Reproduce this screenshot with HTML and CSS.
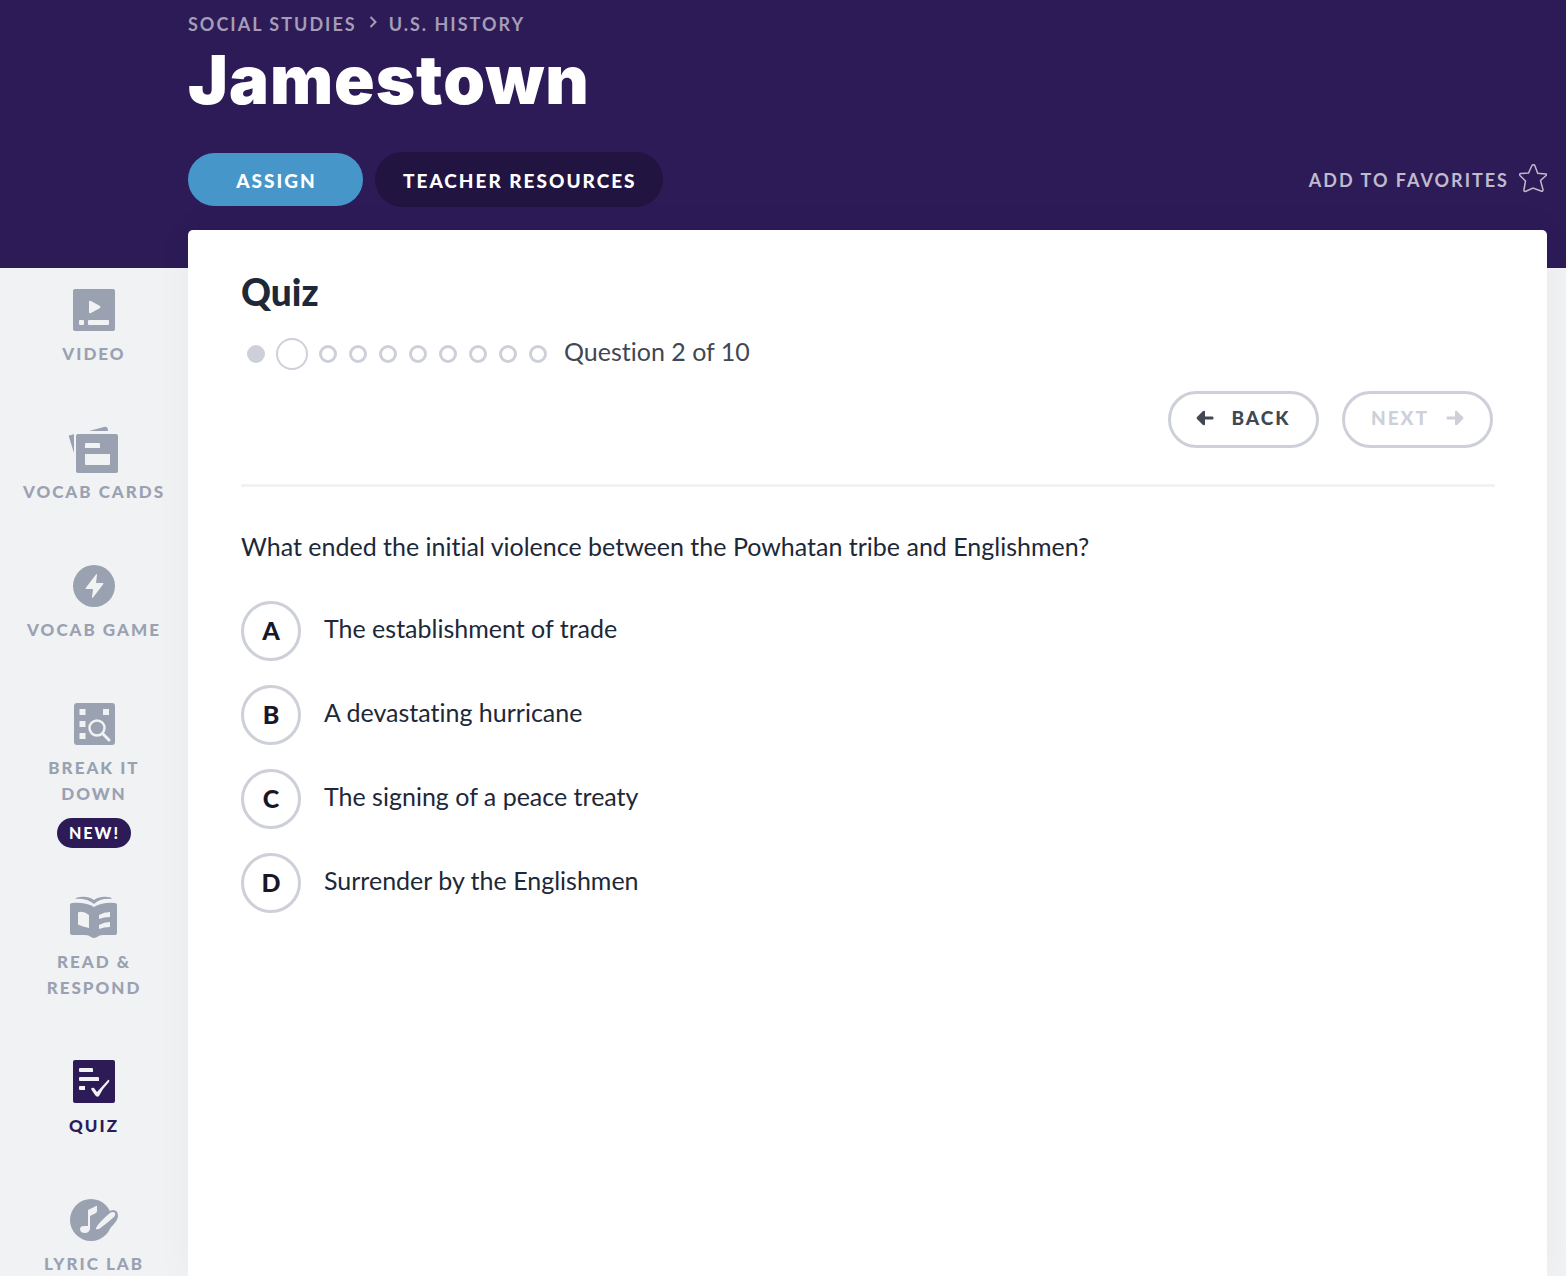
FILE: index.html
```html
<!DOCTYPE html>
<html lang="en">
  <head>
    <meta charset="UTF-8" />
    <meta name="viewport" content="width=device-width, initial-scale=1.0" />
    <title>Jamestown - Quiz</title>
    <link rel="stylesheet" href="styles.css">
  </head>
  <body>
    <header class="header">
      <nav class="breadcrumb">
        <a href="#">Social Studies</a>
        <svg width="8" height="12" viewBox="0 0 8 12"><path d="M1.5 1l5 5-5 5" fill="none" stroke="currentColor" stroke-width="2" /></svg>
        <a href="#">U.S. History</a>
      </nav>
      <h1>Jamestown</h1>
      <div class="actions">
        <button class="btn btn-assign">Assign</button>
        <button class="btn btn-resources">Teacher Resources</button>
        <a class="favorite" href="#">
          Add to favorites
          <svg width="28" height="30" viewBox="0 0 28 30"><path d="M14 2Q15 1 16 3L18.700 10.200L27 11Q28 11.500 27 12.500L21.500 17.500L24 26.500Q24 29 22 28L14 25L6.500 28.500Q4.500 28.500 5 26.500L6.500 18L1 12.500Q0 11 1.500 10.500L9.500 10L12.700 3Q13.300 1.500 14 2Z" fill="none" stroke="currentColor" stroke-width="1.500" /></svg>
        </a>
      </div>
    </header>

    <div class="layout">
      <nav class="sidebar">
        <a class="item" href="#">
          <svg class="icon" viewBox="0 0 48 48">
            <rect x="3" y="3" width="42" height="42" rx="2" />
            <path class="cut" d="M19 16q0-2 2-1l9 5q1 1 0 2l-9 5q-2 1-2-1zM10 34h3q1 0 1 1v3q0 1-1 1h-3q-1 0-1-1v-3q0-1 1-1zM19 34h19q1 0 1 1v3q0 1-1 1h-19q-1 0-1-1v-3q0-1 1-1z" />
          </svg>
          <span class="label">Video</span>
        </a>
        <a class="item" href="#">
          <svg class="icon" viewBox="0 0 48 48">
            <path d="M-1 13q-1-2 2-2l3-1v19zM19 7l15-4q4-1 4 4z" />
            <rect x="6" y="10" width="42" height="39" rx="2" />
            <path class="cut" d="M16 19h13q1 0 1 1v4h-15v-4q0-1 1-1zM15 30h25v10q0 1-1 1h-23q-1 0-1-1z" />
          </svg>
          <span class="label">Vocab Cards</span>
        </a>
        <a class="item" href="#">
          <svg class="icon" viewBox="0 0 48 48">
            <circle cx="24" cy="24" r="21" />
            <path class="cut" d="M26 12.500q1-1 1 .5l-1 8h7q1 0 0 1.500L23 35.500q-1 1-1-.5l1-8h-7q-1 0 0-1.500z" />
          </svg>
          <span class="label">Vocab Game</span>
        </a>
        <a class="item" href="#">
          <svg class="icon" viewBox="0 0 48 48">
            <rect x="4" y="3" width="41" height="42" rx="3" />
            <path class="cut" d="M9.500 9h6v6h-6zM33 9h6v6h-6zM9.500 21h6v6h-6zM9.500 33h6v6h-6z" />
            <path class="cut-line" d="M33 34l6 6" stroke-width="3" stroke-linecap="round" />
            <circle class="cut-line" cx="27" cy="28" r="7.500" stroke-width="2.500" />
          </svg>
          <span class="label">Break It<br>Down</span>
          <span class="badge">New!</span>
        </a>
        <a class="item" href="#">
          <svg class="icon" viewBox="0 0 48 48">
            <path d="M5 5q2-2 5-2 8-1 14 3 6-4 14-3 3 0 4 2-12-1-18 5-7-6-19-5z" />
            <path d="M2 9q13-1 22 4 9-5 21-4 2 0 2 2v28q0 2-2 2h-12q-4 0-6 2-3 2-6 0-2-2-6-2H2q-2 0-2-2V11q0-2 2-2z" />
            <path class="cut" d="M9 18q5-1 10 3v13q-5-1-10-3q-1 0-1-1v-11q0-1 1-1zM29 21q5-3 11-3v5q-6 0-11 2zM29 31q5-3 11-3v5q-6 0-11 2z" />
          </svg>
          <span class="label">Read &amp;<br>Respond</span>
        </a>
        <a class="item active" href="#">
          <svg class="icon" viewBox="0 0 48 48">
            <rect x="3" y="2" width="42" height="43" rx="2" />
            <path class="cut" d="M10 10h12q1 0 1 1v3H10q-1 0-1-1v-2q0-1 1-1zM10 19h18q1 0 1 1v3H10q-1 0-1-1v-2q0-1 1-1zM10 28h5v4h-5q-1 0-1-1v-2q0-1 1-1zM21 31q1-2 3-1l3 4 11-12q2-1 1 2-6 6-10 14-2 2-4-1z" />
          </svg>
          <span class="label">Quiz</span>
        </a>
        <a class="item" href="#">
          <svg class="icon" viewBox="0 0 48 48">
            <circle cx="21" cy="24" r="21" />
            <path d="M40 20q4-4 4 0 0 4-12 14" class="halo" />
            <path class="cut" d="M18 14l8-4q1-1 1 1v4q0 1-1 2l-6 3v13q-1 4-5 4-5 0-5-4 0-3 4-3h4zM26 32q3-6 14-15 3-2 5 0 1 2-1 4-8 7-15 12-4 1-3-1z" />
          </svg>
          <span class="label">Lyric Lab</span>
        </a>
      </nav>

      <main class="card">
        <h2>Quiz</h2>
        <div class="progress">
          <span class="dot done"></span>
          <span class="dot current"></span>
          <span class="dot"></span>
          <span class="dot"></span>
          <span class="dot"></span>
          <span class="dot"></span>
          <span class="dot"></span>
          <span class="dot"></span>
          <span class="dot"></span>
          <span class="dot"></span>
          <span class="count">Question 2 of 10</span>
        </div>

        <div class="pager">
          <button class="page-btn">
            <svg width="18" height="16" viewBox="0 0 18 16"><path d="M1 7l6-6q2-1 2 1v4.500h7.500q1 0 1 1.500t-1 1.500H9V14q0 2-2 1L1 9q-1-1 0-2z" /></svg>
            Back
          </button>
          <button class="page-btn" disabled>
            Next
            <svg width="18" height="16" viewBox="0 0 18 16"><path d="M17 7l-6-6q-2-1-2 1v4.500H1.500q-1 0-1 1.500t1 1.500H9V14q0 2 2 1l6-6q1-1 0-2z" /></svg>
          </button>
        </div>

        <p class="question">What ended the initial violence between the Powhatan tribe and Englishmen?</p>
        <div class="answers">
          <button class="answer"><span class="letter">A</span><span class="text">The establishment of trade</span></button>
          <button class="answer"><span class="letter">B</span><span class="text">A devastating hurricane</span></button>
          <button class="answer"><span class="letter">C</span><span class="text">The signing of a peace treaty</span></button>
          <button class="answer"><span class="letter">D</span><span class="text">Surrender by the Englishmen</span></button>
        </div>
      </main>
    </div>
  </body>
</html>
```
FILE: styles.css
```css
* {
  box-sizing: border-box;
}
body {
  margin: 0;
  font-family: Lato, "Noto Sans", sans-serif;
  font-variant-ligatures: none;
  background-color: #f0f2f4;
  color: #1d2838;
}
a {
  color: inherit;
  text-decoration: none;
}
button {
  font-family: inherit;
  font-variant-ligatures: none;
  cursor: pointer;
}
.header {
  height: 268px;
  padding: 10px 19px 0 188px;
  background-color: #2c1b57;
  color: #fff;
}
.breadcrumb {
  display: flex;
  align-items: center;
  gap: 12px;
  font-size: 18px;
  font-weight: 700;
  line-height: 28px;
  letter-spacing: 2px;
  text-transform: uppercase;
  color: #a59db8;
}
.breadcrumb svg {
  margin-bottom: 4px;
}
h1 {
  margin: 0 0 30px;
  font-family: Inter, sans-serif;
  font-size: 67px;
  font-weight: 900;
  line-height: 84px;
  letter-spacing: 1px;
}
.actions {
  display: flex;
  align-items: center;
  gap: 12px;
}
.btn {
  height: 53px;
  padding: 2px 26px 0 28px;
  border: none;
  border-radius: 28px;
  color: #fff;
  font-size: 19px;
  font-weight: 900;
  letter-spacing: 2px;
  text-transform: uppercase;
}
.btn-assign {
  width: 175px;
  background-color: #4696ca;
}
.btn-resources {
  height: 55px;
  background-color: #211440;
}
.favorite {
  display: flex;
  align-items: center;
  gap: 10px;
  margin-left: auto;
  font-size: 18px;
  font-weight: 700;
  letter-spacing: 2px;
  text-transform: uppercase;
  color: #c0bacd;
}
.favorite svg {
  margin-bottom: 3px;
}
.layout {
  display: flex;
}
.sidebar {
  display: flex;
  flex-direction: column;
  gap: 46px;
  width: 188px;
  padding-top: 18px;
}
.item {
  display: flex;
  flex-direction: column;
  align-items: center;
  color: #9aa1b1;
  text-align: center;
}
.icon {
  width: 48px;
  height: 48px;
  margin-bottom: 7px;
  fill: currentColor;
  overflow: visible;
}
.icon .cut {
  fill: #f0f2f4;
}
.icon .cut-line {
  fill: none;
  stroke: #f0f2f4;
}
.icon .halo {
  stroke: currentColor;
  stroke-width: 8px;
}
.label {
  margin-bottom: 11px;
  font-size: 17px;
  font-weight: 900;
  line-height: 26px;
  letter-spacing: 2px;
  text-transform: uppercase;
}
.item:last-child .label {
  margin-bottom: 0;
}
.badge {
  padding: 0 11px 0 12px;
  border-radius: 15px;
  background-color: #2c1b57;
  color: #fff;
  font-size: 16px;
  font-weight: 900;
  line-height: 30px;
  letter-spacing: 2px;
  text-transform: uppercase;
}
.active {
  color: #2c1b57;
}
.card {
  flex: 1;
  min-height: calc(100vh - 230px);
  margin: -38px 19px 0 0;
  padding: 35px 52px 40px 53px;
  border-radius: 5px 5px 0 0;
  background-color: #fff;
  box-shadow: 0 0 40px rgba(0, 0, 0, 0.04);
}
h2 {
  margin: 0 0 19px;
  font-size: 37px;
  font-weight: 900;
  line-height: 54px;
}
.progress {
  display: flex;
  align-items: center;
  gap: 12px;
  height: 32px;
  padding-left: 6px;
}
.dot {
  width: 18px;
  height: 18px;
  border: 3px solid #cdd0d9;
  border-radius: 50%;
}
.done {
  background-color: #cdd0d9;
}
.current {
  width: 32px;
  height: 32px;
  margin: 0 -1px;
  border-width: 2px;
}
.count {
  margin-left: 5px;
  padding-bottom: 6px;
  font-size: 25px;
  color: #414753;
}
.pager {
  display: flex;
  justify-content: flex-end;
  gap: 23px;
  padding: 21px 2px 36px 0;
  border-bottom: 3px solid #f0f2f4;
}
.page-btn {
  display: flex;
  align-items: center;
  justify-content: center;
  gap: 17px;
  width: 151px;
  height: 57px;
  padding: 0 0 4px;
  border: 3px solid #cdd0d9;
  border-radius: 29px;
  background-color: #fff;
  color: #414753;
  font-size: 19px;
  font-weight: 900;
  letter-spacing: 2px;
  text-transform: uppercase;
}
.page-btn svg {
  fill: currentColor;
}
.page-btn:disabled {
  color: #cdd0d9;
  cursor: default;
}
.question {
  margin: 41px 0 37px;
  font-size: 25px;
  line-height: 36px;
}
.answers {
  display: flex;
  flex-direction: column;
  gap: 24px;
}
.answer {
  display: flex;
  align-items: center;
  gap: 23px;
  padding: 0;
  border: none;
  background: none;
  color: inherit;
  font-size: 25px;
  line-height: 36px;
  text-align: left;
}
.letter {
  width: 60px;
  height: 60px;
  border: 3px solid #cdd0d9;
  border-radius: 50%;
  color: #191726;
  font-weight: 900;
  line-height: 52px;
  text-align: center;
}
.text {
  padding-bottom: 6px;
}
```
